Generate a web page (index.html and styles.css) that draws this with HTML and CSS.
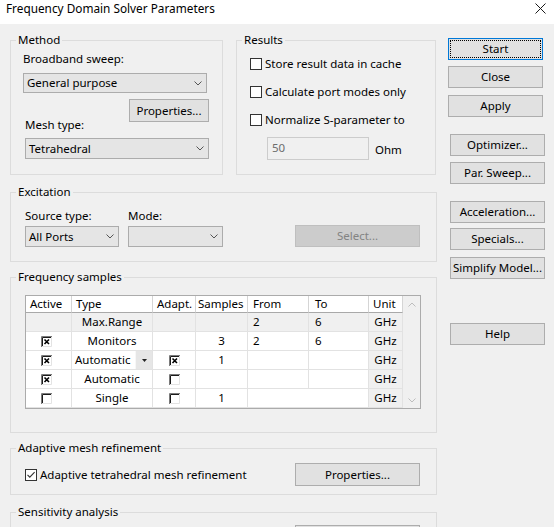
FILE: index.html
```html
<!DOCTYPE html>
<html>
<head>
<meta charset="utf-8">
<title>Frequency Domain Solver Parameters</title>
<link rel="stylesheet" href="styles.css">
</head>
<body>
<div class="titlebar">
  <span class="title">Frequency Domain Solver Parameters</span>
  <svg class="close-x" width="11" height="11" viewBox="0 0 11 11"><path d="M0.5 0.5L10.5 10.5M10.5 0.5L0.5 10.5" stroke="#1a1a1a" stroke-width="1" fill="none"/></svg>
</div>
<div class="dialog">
  <div class="main">
    <div class="top-row">
      <fieldset class="grp grp-method">
        <legend>Method</legend>
        <div class="lbl lbl-bb">Broadband sweep:</div>
        <div class="combo combo-bb"><span class="combo-text">General purpose</span><svg class="chev" width="8" height="5" viewBox="0 0 8 5"><path d="M0.5 0.5L4 4L7.5 0.5" fill="none" stroke="#555"/></svg></div>
        <button class="btn btn-props1">Properties...</button>
        <div class="lbl lbl-mesh">Mesh type:</div>
        <div class="combo combo-mesh"><span class="combo-text">Tetrahedral</span><svg class="chev" width="8" height="5" viewBox="0 0 8 5"><path d="M0.5 0.5L4 4L7.5 0.5" fill="none" stroke="#555"/></svg></div>
      </fieldset>
      <fieldset class="grp grp-results">
        <legend>Results</legend>
        <div class="chk-row chk-row-first"><span class="chk"></span><span>Store result data in cache</span></div>
        <div class="chk-row"><span class="chk"></span><span>Calculate port modes only</span></div>
        <div class="chk-row"><span class="chk"></span><span>Normalize S-parameter to</span></div>
        <div class="ohm-row"><div class="input-dis">50</div><span class="ohm">Ohm</span></div>
      </fieldset>
    </div>

    <fieldset class="grp grp-exc">
      <legend>Excitation</legend>
      <div class="exc-labels"><span class="exc-lbl-src">Source type:</span><span>Mode:</span></div>
      <div class="exc-controls">
        <div class="combo combo-src"><span class="combo-text">All Ports</span><svg class="chev" width="8" height="5" viewBox="0 0 8 5"><path d="M0.5 0.5L4 4L7.5 0.5" fill="none" stroke="#555"/></svg></div>
        <div class="combo combo-mode"><span class="combo-text"></span><svg class="chev" width="8" height="5" viewBox="0 0 8 5"><path d="M0.5 0.5L4 4L7.5 0.5" fill="none" stroke="#555"/></svg></div>
        <button class="btn btn-disabled btn-select">Select...</button>
      </div>
    </fieldset>

    <fieldset class="grp grp-freq">
      <legend>Frequency samples</legend>
      <div class="grid-wrap">
        <div class="fgrid">
          <div class="h">Active</div>
          <div class="h">Type</div>
          <div class="h">Adapt.</div>
          <div class="h h-samples">Samples</div>
          <div class="h h-from">From</div>
          <div class="h h-to">To</div>
          <div class="h h-unit">Unit</div>

          <div class="c fixed"></div>
          <div class="c fixed center">Max.Range</div>
          <div class="c fixed"></div>
          <div class="c fixed"></div>
          <div class="c fixed val-from">2</div>
          <div class="c fixed val-to">6</div>
          <div class="c unit center">GHz</div>

          <div class="c center cb-cell"><svg class="tcb" width="11" height="11" viewBox="0 0 11 11"><rect width="11" height="11" fill="#fff"/><path d="M0.5 11V0.5H11" fill="none" stroke="#7a7a7a"/><path d="M1.5 10V1.5H10" fill="none" stroke="#1a1a1a"/><path d="M10.5 1V10.5H1" fill="none" stroke="#e3e3e3"/><path d="M3.5 3.5L8 8M8 3.5L3.5 8" stroke="#000" stroke-width="1.6"/></svg></div>
          <div class="c center">Monitors</div>
          <div class="c"></div>
          <div class="c center">3</div>
          <div class="c val-from">2</div>
          <div class="c val-to">6</div>
          <div class="c unit center">GHz</div>

          <div class="c center cb-cell"><svg class="tcb" width="11" height="11" viewBox="0 0 11 11"><rect width="11" height="11" fill="#fff"/><path d="M0.5 11V0.5H11" fill="none" stroke="#7a7a7a"/><path d="M1.5 10V1.5H10" fill="none" stroke="#1a1a1a"/><path d="M10.5 1V10.5H1" fill="none" stroke="#e3e3e3"/><path d="M3.5 3.5L8 8M8 3.5L3.5 8" stroke="#000" stroke-width="1.6"/></svg></div>
          <div class="c type-dd"><span>Automatic</span><span class="dd"><svg width="5" height="3" viewBox="0 0 5 3"><path d="M0 0H5L2.5 3Z" fill="#222"/></svg></span></div>
          <div class="c center"><svg class="tcb" width="11" height="11" viewBox="0 0 11 11"><rect width="11" height="11" fill="#fff"/><path d="M0.5 11V0.5H11" fill="none" stroke="#7a7a7a"/><path d="M1.5 10V1.5H10" fill="none" stroke="#1a1a1a"/><path d="M10.5 1V10.5H1" fill="none" stroke="#e3e3e3"/><path d="M3.5 3.5L8 8M8 3.5L3.5 8" stroke="#000" stroke-width="1.6"/></svg></div>
          <div class="c center">1</div>
          <div class="c"></div>
          <div class="c"></div>
          <div class="c unit center">GHz</div>

          <div class="c center cb-cell"><svg class="tcb" width="11" height="11" viewBox="0 0 11 11"><rect width="11" height="11" fill="#fff"/><path d="M0.5 11V0.5H11" fill="none" stroke="#7a7a7a"/><path d="M1.5 10V1.5H10" fill="none" stroke="#1a1a1a"/><path d="M10.5 1V10.5H1" fill="none" stroke="#e3e3e3"/><path d="M3.5 3.5L8 8M8 3.5L3.5 8" stroke="#000" stroke-width="1.6"/></svg></div>
          <div class="c center">Automatic</div>
          <div class="c center"><svg class="tcb" width="11" height="11" viewBox="0 0 11 11"><rect width="11" height="11" fill="#fff"/><path d="M0.5 11V0.5H11" fill="none" stroke="#7a7a7a"/><path d="M1.5 10V1.5H10" fill="none" stroke="#1a1a1a"/><path d="M10.5 1V10.5H1" fill="none" stroke="#e3e3e3"/></svg></div>
          <div class="c"></div>
          <div class="c"></div>
          <div class="c"></div>
          <div class="c unit center">GHz</div>

          <div class="c center cb-cell"><svg class="tcb" width="11" height="11" viewBox="0 0 11 11"><rect width="11" height="11" fill="#fff"/><path d="M0.5 11V0.5H11" fill="none" stroke="#7a7a7a"/><path d="M1.5 10V1.5H10" fill="none" stroke="#1a1a1a"/><path d="M10.5 1V10.5H1" fill="none" stroke="#e3e3e3"/></svg></div>
          <div class="c center">Single</div>
          <div class="c center"><svg class="tcb" width="11" height="11" viewBox="0 0 11 11"><rect width="11" height="11" fill="#fff"/><path d="M0.5 11V0.5H11" fill="none" stroke="#7a7a7a"/><path d="M1.5 10V1.5H10" fill="none" stroke="#1a1a1a"/><path d="M10.5 1V10.5H1" fill="none" stroke="#e3e3e3"/></svg></div>
          <div class="c center">1</div>
          <div class="c span2"></div>
          <div class="c unit center">GHz</div>
        </div>
        <div class="vscroll">
          <svg width="8" height="5" viewBox="0 0 8 5"><path d="M0.5 4.5L4 1L7.5 4.5" fill="none" stroke="#bdbdbd"/></svg>
          <svg width="8" height="5" viewBox="0 0 8 5"><path d="M0.5 0.5L4 4L7.5 0.5" fill="none" stroke="#bdbdbd"/></svg>
        </div>
      </div>
    </fieldset>

    <fieldset class="grp grp-amr">
      <legend>Adaptive mesh refinement</legend>
      <div class="amr-row">
        <span class="chk chk-on"><svg width="10" height="10" viewBox="0 0 10 10"><path d="M1.5 4.8L3.8 7.2L8.6 2.2" fill="none" stroke="#333" stroke-width="1.1"/></svg></span>
        <span class="amr-text">Adaptive tetrahedral mesh refinement</span>
        <button class="btn btn-props2">Properties...</button>
      </div>
    </fieldset>

    <fieldset class="grp grp-sens">
      <legend>Sensitivity analysis</legend>
      <div class="btn btn-sens"></div>
    </fieldset>
  </div>

  <div class="side">
    <button class="btn btn-side btn-start">Start</button>
    <button class="btn btn-side btn-close">Close</button>
    <button class="btn btn-side btn-apply">Apply</button>
    <button class="btn btn-side btn-lower btn-opt">Optimizer...</button>
    <button class="btn btn-side btn-lower btn-par">Par. Sweep...</button>
    <button class="btn btn-side btn-lower btn-acc">Acceleration...</button>
    <button class="btn btn-side btn-lower btn-spec">Specials...</button>
    <button class="btn btn-side btn-lower btn-simp">Simplify Model...</button>
    <button class="btn btn-side btn-lower btn-help">Help</button>
  </div>
</div>
</body>
</html>
```

FILE: styles.css
```css
* { box-sizing: border-box; }
html, body { margin: 0; padding: 0; }
body {
  background: #f0f0f0;
  font-family: "Noto Sans", "Open Sans", sans-serif;
  font-size: 11.5px;
  line-height: 14px;
  color: #000;
  width: 554px;
  height: 527px;
  overflow: hidden;
}

/* title bar */
.titlebar {
  height: 24px;
  background: #fff;
  display: flex;
  align-items: flex-start;
  padding-left: 6px;
}
.title { margin-top: 1px; font-size: 11.8px; }
.close-x { margin-left: auto; margin-right: 8px; margin-top: 3px; }

/* layout */
.dialog { display: flex; padding-left: 10px; }
.main { width: 427px; }
.side {
  margin-left: 11px;
  width: 98px;
  display: flex;
  flex-direction: column;
  align-items: flex-start;
}

/* group boxes */
.grp {
  margin: 0;
  padding: 0;
  border: 1px solid #dcdcdc;
  min-width: 0;
}
.grp legend {
  padding: 0 2px;
  margin-left: 5px;
  line-height: 14px;
}
.top-row { display: flex; margin-top: 9px; }
.grp-method { width: 213px; height: 142px; }
.grp-results { width: 200px; height: 142px; margin-left: 13px; }
.grp-exc { width: 427px; height: 77px; margin-top: 10px; }
.grp-freq { width: 427px; height: 163px; margin-top: 8px; }
.grp-amr { width: 427px; height: 54px; margin-top: 8px; }
.grp-sens { width: 427px; height: 40px; margin-top: 10px; }

/* controls */
.btn {
  font: inherit;
  line-height: 14px;
  color: #000;
  background: #e1e1e1;
  border: 1px solid #adadad;
  padding: 0;
  height: 22px;
  display: block;
}
.btn-disabled {
  background: #cccccc;
  border-color: #bfbfbf;
  color: #838383;
}
.combo {
  display: flex;
  align-items: center;
  background: #e5e5e5;
  border: 1px solid #acacac;
  padding: 0 4px 0 3px;
}
.combo-text { flex: 1; white-space: nowrap; }
.chev { flex: none; }

.lbl-bb { margin: 5px 0 0 12px; }
.combo-bb { margin: 7px 0 0 12px; width: 184px; height: 20px; }
.btn-props1 { margin: 6px 0 0 118px; width: 80px; height: 23px; }
.lbl-mesh { margin: -4px 0 0 14px; }
.combo-mesh { margin: 6px 0 0 14px; width: 184px; height: 21px; }

.chk-row {
  display: flex;
  align-items: center;
  height: 20px;
  margin: 8px 0 0 13px;
}
.chk-row-first { margin-top: 7px; }
.chk {
  width: 12px;
  height: 12px;
  border: 1px solid #333;
  background: #fff;
  margin-right: 3px;
  flex: none;
  display: flex;
  align-items: center;
  justify-content: center;
}
.ohm-row { display: flex; align-items: center; margin: 7px 0 0 30px; }
.input-dis {
  width: 102px;
  height: 23px;
  border: 1px solid #cccccc;
  background: #f0f0f0;
  color: #6d6d6d;
  padding-left: 4px;
  line-height: 19px;
}
.ohm { margin-left: 6px; padding-top: 3px; }

/* excitation */
.exc-labels { display: flex; margin: 10px 0 0 14px; }
.exc-lbl-src { width: 103px; }
.exc-controls { display: flex; align-items: flex-start; margin: 2px 0 0 14px; }
.combo-src { margin-top: 1px; width: 94px; height: 21px; }
.combo-mode { margin-top: 1px; margin-left: 9px; width: 95px; height: 21px; }
.btn-select { margin-left: 72px; width: 125px; height: 22px; }

/* frequency grid */
.grid-wrap {
  display: flex;
  margin: 11px 0 0 14px;
  width: 396px;
  border: 1px solid #ababab;
  background: #fff;
}
.fgrid {
  display: grid;
  grid-template-columns: 46px 81px 43px 52px 61px 60px 34px;
  width: 377px;
}
.h {
  height: 17px;
  border-right: 1px solid #d5d5d5;
  border-bottom: 1px solid #a9a9a9;
  padding-left: 4px;
  display: flex;
  align-items: center;
  white-space: nowrap;
  background: #fff;
}
.h-samples { padding-left: 2px; }
.h-from { padding-left: 5px; }
.h-to { padding-left: 6px; }
.h-unit { padding-left: 4px; }
.c {
  height: 19px;
  border-right: 1px solid #e2e2e2;
  border-bottom: 1px solid #e2e2e2;
  display: flex;
  align-items: center;
  white-space: nowrap;
  overflow: hidden;
  background: #fff;
}
.c.center { justify-content: center; }
.cb-cell { padding-right: 4px; }
.fixed { background: #f0f0f0; }
.unit { background: #f0f0f0; }
.val-from { padding-left: 5px; }
.val-to { padding-left: 6px; }
.span2 { grid-column: span 2; }
.type-dd { padding-left: 3px; }
.type-dd span:first-child { flex: 1; }
.dd {
  width: 17px;
  height: 18px;
  background: #e6e6e6;
  border-left: 1px solid #f7f7f7;
  display: flex;
  align-items: center;
  justify-content: center;
  flex: none;
}
.vscroll {
  width: 17px;
  background: #f0f0f0;
  display: flex;
  flex-direction: column;
  justify-content: space-between;
  align-items: center;
  padding: 6px 0 5px;
}

/* adaptive mesh */
.amr-row { display: flex; align-items: center; margin: 8px 0 0 14px; height: 23px; }
.chk-on { background: #fff; }
.btn-props2 { margin-left: auto; margin-right: 16px; width: 125px; height: 23px; }
.btn-sens { margin: 6px 0 0 284px; width: 125px; height: 22px; }

/* side buttons */
.btn-side { width: 95px; height: 22px; }
.btn-lower { margin-left: 2px; }
.btn-start {
  margin-top: 14px;
  border-color: #0078d7;
  outline: 1px dotted #000;
  outline-offset: -3px;
}
.btn-close { margin-top: 6px; }
.btn-apply { margin-top: 7px; }
.btn-opt { margin-top: 17px; }
.btn-par { margin-top: 6px; }
.btn-acc { margin-top: 17px; }
.btn-spec { margin-top: 5px; }
.btn-simp { margin-top: 7px; }
.btn-help { margin-top: 44px; }
```
